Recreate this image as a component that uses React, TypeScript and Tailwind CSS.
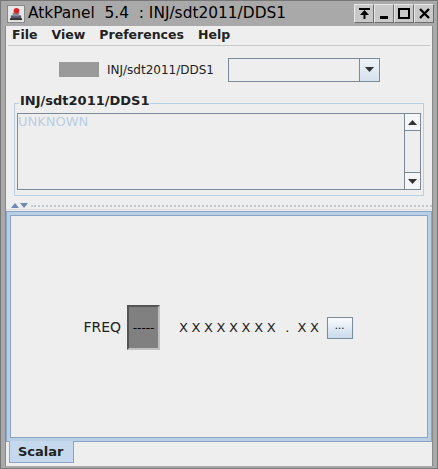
import React from 'react';

const font = { fontFamily: '"DejaVu Sans", "Liberation Sans", sans-serif' };

const TitleButton = ({ children }: { children: React.ReactNode }) => (
  <div className="w-[20px] h-[19px] bg-[#c8c8c8] border border-t-[#e8e8e8] border-l-[#e8e8e8] border-r-[#6e6e6e] border-b-[#6e6e6e] flex items-center justify-center">
    {children}
  </div>
);

const Arrow = ({ down }: { down?: boolean }) => (
  <svg width="9" height="5" viewBox="0 0 9 5">
    {down ? <polygon points="0,0 9,0 4.5,5" fill="#333" /> : <polygon points="0,5 9,5 4.5,0" fill="#333" />}
  </svg>
);

export default function App() {
  return (
    <div className="w-[438px] h-[469px] bg-[#a9a9a9] flex flex-col border border-[#777] select-none" style={font}>
      {/* title bar */}
      <div className="h-[25px] flex items-center pl-[6px] pr-[3px] shrink-0">
        <div className="w-[18px] h-[18px] bg-[#e6e6e6] border border-[#888] flex items-center justify-center mr-[3px]">
          <svg width="14" height="14" viewBox="0 0 15 15">
            <rect x="2" y="9" width="11" height="4" fill="#556" />
            <rect x="4" y="6" width="7" height="4" fill="#889" />
            <circle cx="8" cy="4" r="3" fill="#d22" />
            <rect x="1" y="12" width="13" height="2" fill="#333" />
          </svg>
        </div>
        <span className="text-[15.4px] text-black whitespace-pre leading-none">AtkPanel  5.4  : INJ/sdt2011/DDS1</span>
        <div className="ml-auto flex">
          <TitleButton>
            <svg width="11" height="11" viewBox="0 0 11 11">
              <rect x="0" y="0" width="11" height="2" fill="#000" />
              <polygon points="5.5,2 1,7 10,7" fill="#000" />
              <rect x="4.5" y="6" width="2" height="5" fill="#000" />
            </svg>
          </TitleButton>
          <TitleButton>
            <div className="w-[8px] h-[3px] bg-black mt-[8px]" />
          </TitleButton>
          <TitleButton>
            <div className="w-[12px] h-[11px] border-2 border-black" />
          </TitleButton>
          <TitleButton>
            <svg width="11" height="11" viewBox="0 0 11 11">
              <path d="M1 1 L10 10 M10 1 L1 10" stroke="#000" strokeWidth="2.4" />
            </svg>
          </TitleButton>
        </div>
      </div>

      <div className="flex-1 flex flex-col mx-[4px] mb-[2px] bg-[#eeeeee] border-l border-r border-[#8a8a8a]">
        {/* menu */}
        <div className="h-[19px] flex items-center gap-[14px] pl-[6px] text-[12.5px] font-bold text-[#222] shrink-0">
          <span>File</span>
          <span>View</span>
          <span>Preferences</span>
          <span>Help</span>
        </div>

        {/* top panel */}
        <div className="h-[157px] mx-[2px] border-t border-[#c8c8c8] flex flex-col shrink-0">
          <div className="h-[47px] flex items-center pl-[51px]">
            <div className="w-[40px] h-[15px] bg-[#9a9a9a]" />
            <span className="text-[12px] text-[#222] ml-[8px]">INJ/sdt2011/DDS1</span>
            <div className="ml-[14px] w-[152px] h-[24px] flex border border-[#7a8a99] bg-[#eeeeee]">
              <div className="flex-1" />
              <div className="w-[20px] border-l border-[#7a8a99] flex items-center justify-center bg-gradient-to-b from-[#eef3f8] to-[#d6e2ee]">
                <Arrow down />
              </div>
            </div>
          </div>
          <div className="relative mx-[6px] h-[93px] border border-[#b8cfe5] mt-[10px]">
            <span className="absolute -top-[10px] left-[4px] bg-[#eeeeee] px-[1px] text-[13px] font-bold text-[#222] leading-none">INJ/sdt2011/DDS1</span>
            <div className="absolute left-[2px] right-[2px] top-[9px] bottom-[5px] border border-[#7a8a99] flex">
              <div className="flex-1 text-[13px] text-[#b8cfe5] leading-[15px]">UNKNOWN</div>
              <div className="w-[16px] border-l border-[#7a8a99] flex flex-col">
                <div className="h-[17px] border-b border-[#7a8a99] flex items-center justify-center bg-[#f4f6f9]"><Arrow /></div>
                <div className="flex-1" />
                <div className="h-[17px] border-t border-[#7a8a99] flex items-center justify-center bg-[#f4f6f9]"><Arrow down /></div>
              </div>
            </div>
          </div>
        </div>

        {/* splitter */}
        <div className="h-[8px] flex items-center pl-[5px] gap-[1px] shrink-0 border-b border-[#dcdcdc]">
          <svg width="8" height="5" viewBox="0 0 8 5"><polygon points="0,5 8,5 4,0" fill="#6a89b8" /></svg>
          <svg width="8" height="5" viewBox="0 0 8 5"><polygon points="0,0 8,0 4,5" fill="#6a89b8" /></svg>
          <div className="flex-1 h-[2px] ml-[2px] border-t-2 border-dotted border-[#c0c8d0]" />
        </div>

        {/* tabbed pane */}
        <div className="flex-1 flex flex-col px-[1px] pt-[2px] pb-[3px]">
          <div className="flex-1 border-[3px] border-[#b8cfe5] outline outline-1 outline-[#8aa4c8] flex">
            <div className="flex-1 border border-[#8aa4c8] bg-[#eeeeee] flex items-center justify-center pr-[2px] pt-[2px]">
              <span className="text-[14px] text-[#222] mr-[6px]">FREQ</span>
              <div className="w-[33px] h-[45px] bg-[#808080] border-2 border-t-[#555] border-l-[#555] border-r-[#c0c0c0] border-b-[#c0c0c0] flex items-center justify-center text-[12px] text-black">-----</div>
              <span className="ml-[19px] text-[13px] text-[#222] tracking-[3.6px] whitespace-pre">XXXXXXXX<span className="tracking-[2px]"> . </span>XX</span>
              <div className="ml-[4px] w-[26px] h-[22px] border border-[#7a8a99] bg-gradient-to-b from-[#fafcfe] to-[#c8d9ea] flex items-center justify-center text-[10px] leading-none pb-[3px]">...</div>
            </div>
          </div>
          <div className="h-[22px] flex shrink-0">
            <div className="w-[65px] ml-[2px] bg-[#c5d8ee] border-l border-b border-r border-[#8aa4c8] flex items-center pl-[8px] text-[13px] font-bold text-[#222]">Scalar</div>
          </div>
        </div>
      </div>
    </div>
  );
}
